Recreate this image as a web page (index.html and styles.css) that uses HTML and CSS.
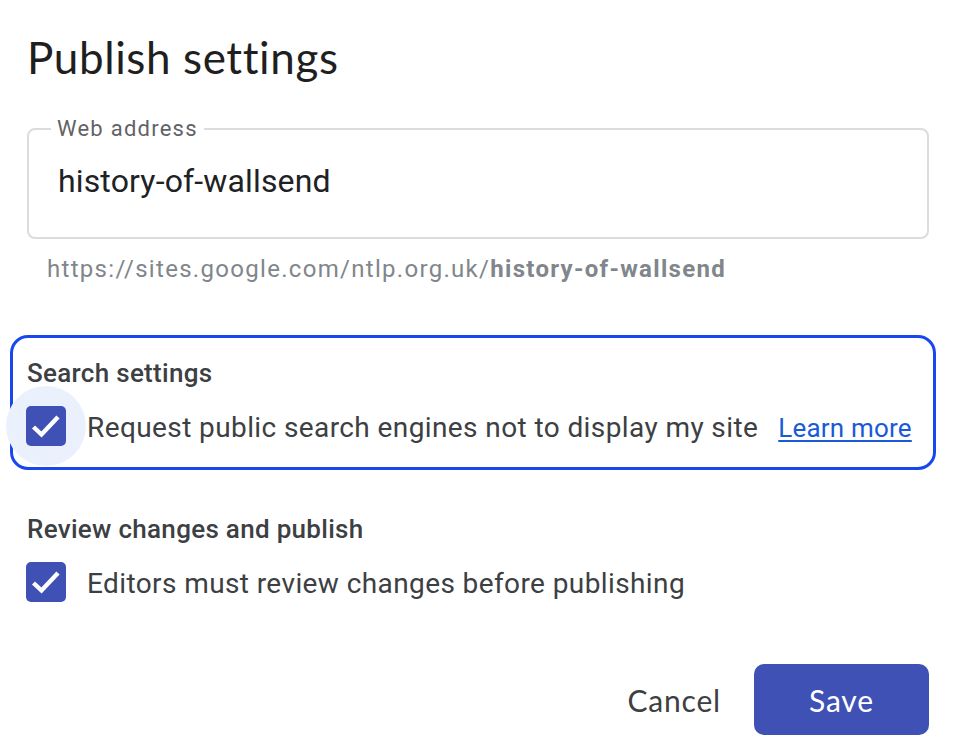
FILE: index.html
```html
<!DOCTYPE html>
<html lang="en">
<head>
<meta charset="utf-8">
<title>Publish settings</title>
<link rel="stylesheet" href="styles.css">
</head>
<body>
<div class="dialog">
  <h1 class="title">Publish settings</h1>

  <fieldset class="field">
    <legend class="field-label">Web address</legend>
    <div class="field-value">history-of-wallsend</div>
  </fieldset>
  <div class="helper">https://sites.google.com/ntlp.org.uk/<b>history-of-wallsend</b></div>

  <section class="group group-focused">
    <h2 class="group-title">Search settings</h2>
    <div class="check-row">
      <span class="checkbox checkbox-halo">
        <svg viewBox="0 0 40 40" width="40" height="40"><polyline points="7.5,21 15.5,28.5 32,11" fill="none" stroke="#fff" stroke-width="4.4"/></svg>
      </span>
      <span class="check-label">Request public search engines not to display my site</span>
      <a class="link" href="#">Learn more</a>
    </div>
  </section>

  <section class="group">
    <h2 class="group-title">Review changes and publish</h2>
    <div class="check-row">
      <span class="checkbox">
        <svg viewBox="0 0 40 40" width="40" height="40"><polyline points="7.5,21 15.5,28.5 32,11" fill="none" stroke="#fff" stroke-width="4.4"/></svg>
      </span>
      <span class="check-label">Editors must review changes before publishing</span>
    </div>
  </section>

  <div class="actions">
    <button class="btn btn-text">Cancel</button>
    <button class="btn btn-primary">Save</button>
  </div>
</div>
</body>
</html>
```

FILE: styles.css
```css
html, body {
  margin: 0;
  background: #ffffff;
}

body {
  font-family: Roboto, "Liberation Sans", Arial, sans-serif;
  color: #3c4043;
}

.dialog {
  padding: 31px 43px 0 27px;
}

.title {
  margin: 0;
  font-family: Lato, "Open Sans", sans-serif;
  font-weight: 400;
  font-size: 44px;
  line-height: 52px;
  letter-spacing: 0.6px;
  color: #1f1f1f;
}

.field {
  margin: 34px 0 0 0;
  padding: 21px 22px 37px 22px;
  border: 2px solid #dadce0;
  border-radius: 8px;
  min-width: 0;
}

.field-label {
  padding: 0 6px;
  font-size: 22px;
  line-height: 24px;
  letter-spacing: 1.25px;
  color: #5f6368;
}

.field-value {
  padding-left: 7px;
  font-size: 32px;
  line-height: 38px;
  letter-spacing: 0.15px;
  color: #202124;
}

.helper {
  margin-top: 16px;
  padding-left: 20px;
  font-size: 24px;
  line-height: 28px;
  letter-spacing: 1.3px;
  color: #80868b;
}

.helper b {
  font-weight: 700;
}

.group {
  margin: 0 -7px 0 -17px;
  padding: 21px 7px 21px 14px;
  border: 3px solid transparent;
  border-radius: 18px;
}

.group + .group {
  margin-top: 21px;
}

.dialog .group-focused {
  margin-top: 52px;
  border-color: #1747f0;
}

.group-title {
  margin: 0;
  font-size: 26px;
  line-height: 28px;
  font-weight: 500;
  letter-spacing: 0.3px;
  color: #3c4043;
}

.check-row {
  margin-top: 19px;
  display: flex;
  align-items: center;
}

.checkbox {
  position: relative;
  flex: none;
  width: 40px;
  height: 40px;
  margin-left: -1px;
}

.checkbox svg {
  position: relative;
  display: block;
  background: #3f51b5;
  border-radius: 5px;
}

.checkbox-halo::before {
  content: "";
  position: absolute;
  left: -20px;
  top: -20px;
  width: 80px;
  height: 80px;
  border-radius: 50%;
  background: #ebf1fc;
}

.check-label {
  margin-left: 21px;
  padding-top: 3px;
  font-size: 28px;
  line-height: 32px;
  letter-spacing: 0.4px;
  color: #3c4043;
}

.link {
  margin-left: 20px;
  padding-top: 3px;
  font-size: 26px;
  line-height: 32px;
  letter-spacing: 0.2px;
  color: #1a5ad7;
  text-decoration: underline;
  text-underline-offset: 3px;
}

.actions {
  margin-top: 38px;
  display: flex;
  justify-content: flex-end;
  align-items: center;
  gap: 33px;
}

.btn {
  font-family: Lato, "Open Sans", sans-serif;
  font-size: 30px;
  letter-spacing: 0.8px;
  border: none;
  background: none;
  cursor: pointer;
}

.btn-text {
  padding: 0;
  color: #3c4043;
}

.btn-primary {
  width: 175px;
  height: 71px;
  border-radius: 10px;
  background: #3f51b5;
  color: #ffffff;
}
```
